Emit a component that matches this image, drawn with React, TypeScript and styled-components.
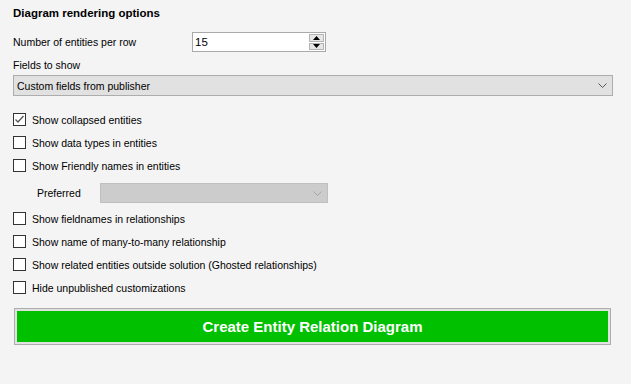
import React from "react"
import styled, { createGlobalStyle } from "styled-components"

const GlobalStyle = createGlobalStyle`
	html, body {
		margin: 0;
		padding: 0;
		background: #f4f4f4;
	}
	body {
		font-family: "Liberation Sans", Arial, sans-serif;
		font-size: 10.5px;
		color: #000;
	}
`

const options = [
	{ label: "Show collapsed entities", checked: true },
	{ label: "Show data types in entities", checked: false },
	{ label: "Show Friendly names in entities", checked: false },
]

const moreOptions = [
	"Show fieldnames in relationships",
	"Show name of many-to-many relationship",
	"Show related entities outside solution (Ghosted relationships)",
	"Hide unpublished customizations",
]

function Chevron(props: { color: string }) {
	return (
		<svg width="9" height="5" viewBox="0 0 9 5">
			<path d="M0.5 0.5 L4.5 4.5 L8.5 0.5" fill="none" stroke={props.color} strokeWidth="1" />
		</svg>
	)
}

function CheckOption(props: { label: string; checked?: boolean }) {
	return (
		<OptionRow>
			<Box>
				{props.checked && (
					<svg width="11" height="11" viewBox="0 0 11 11">
						<path d="M1.5 5.5 L4 8 L9.5 2" fill="none" stroke="#555" strokeWidth="1.3" />
					</svg>
				)}
			</Box>
			<span>{props.label}</span>
		</OptionRow>
	)
}

export default function App() {
	return (
		<>
			<GlobalStyle />
			<Root>
				<Title>Diagram rendering options</Title>

				<FieldRow>
					<FieldLabel>Number of entities per row</FieldLabel>
					<Spin>
						<SpinValue>15</SpinValue>
						<SpinButtons>
							<SpinButton>
								<svg width="7" height="4" viewBox="0 0 7 4">
									<path d="M0 4 L3.5 0 L7 4 Z" fill="#000" />
								</svg>
							</SpinButton>
							<SpinButton>
								<svg width="7" height="4" viewBox="0 0 7 4">
									<path d="M0 0 L3.5 4 L7 0 Z" fill="#000" />
								</svg>
							</SpinButton>
						</SpinButtons>
					</Spin>
				</FieldRow>

				<SubLabel>Fields to show</SubLabel>
				<Combo>
					<span>Custom fields from publisher</span>
					<Chevron color="#555" />
				</Combo>

				<Options>
					{options.map(o => (
						<CheckOption key={o.label} label={o.label} checked={o.checked} />
					))}
				</Options>

				<PreferredRow>
					<PreferredLabel>Preferred</PreferredLabel>
					<Combo disabled>
						<span />
						<Chevron color="#a6a6a6" />
					</Combo>
				</PreferredRow>

				<Options $tight>
					{moreOptions.map(o => (
						<CheckOption key={o} label={o} />
					))}
				</Options>

				<CreateButton>Create Entity Relation Diagram</CreateButton>
			</Root>
		</>
	)
}

const Root = styled.div`
	width: 631px;
	height: 384px;
	box-sizing: border-box;
	padding: 6px 0 0 13px;
	display: flex;
	flex-direction: column;
	background: #f4f4f4;
`

const Title = styled.div`
	font-weight: bold;
	font-size: 11.5px;
	line-height: 15px;
	height: 15px;
`

const FieldRow = styled.div`
	display: flex;
	align-items: center;
	margin-top: 11px;
	height: 20px;
`

const FieldLabel = styled.div`
	width: 179px;
`

const Spin = styled.div`
	width: 134px;
	height: 20px;
	box-sizing: border-box;
	border: 1px solid #a9a9a9;
	background: #fff;
	display: flex;
	align-items: stretch;
`

const SpinValue = styled.div`
	flex: 1;
	padding-left: 2px;
	display: flex;
	align-items: center;
	font-size: 11.5px;
`

const SpinButtons = styled.div`
	width: 15px;
	display: flex;
	flex-direction: column;
	gap: 1px;
	padding: 1px 1px 1px 0;
`

const SpinButton = styled.div`
	flex: 1;
	background: #e6e6e6;
	border: 1px solid #b4b4b4;
	display: flex;
	align-items: center;
	justify-content: center;
`

const SubLabel = styled.div`
	margin-top: 6px;
	line-height: 15px;
	height: 15px;
`

const Combo = styled.div<{ disabled?: boolean }>`
	margin-top: ${p => (p.disabled ? "0" : "2px")};
	width: ${p => (p.disabled ? "228px" : "600px")};
	height: ${p => (p.disabled ? "20px" : "21px")};
	box-sizing: border-box;
	border: 1px solid ${p => (p.disabled ? "#bfbfbf" : "#adadad")};
	background: ${p => (p.disabled ? "#cccccc" : "#e1e1e1")};
	display: flex;
	align-items: center;
	justify-content: space-between;
	padding: 0 5px 0 3px;
`

const Options = styled.div<{ $tight?: boolean }>`
	display: flex;
	flex-direction: column;
	margin-top: ${p => (p.$tight ? "4px" : "12px")};
`

const OptionRow = styled.div`
	height: 23px;
	display: flex;
	align-items: center;
	gap: 6px;
`

const Box = styled.div`
	width: 13px;
	height: 13px;
	box-sizing: border-box;
	border: 1px solid #333;
	background: #fff;
	display: flex;
	align-items: center;
	justify-content: center;
`

const PreferredRow = styled.div`
	display: flex;
	align-items: center;
	margin-top: 6px;
	height: 20px;
	padding-left: 24px;
`

const PreferredLabel = styled.div`
	width: 63px;
`

const CreateButton = styled.button`
	margin: 9px 0 0 1px;
	width: 597px;
	height: 37px;
	box-sizing: border-box;
	border: 1px solid #adadad;
	padding: 0;
	background: #00c000;
	box-shadow: inset 0 0 0 2px #e1e1e1;
	color: #fff;
	font-family: "Liberation Sans", Arial, sans-serif;
	font-weight: bold;
	font-size: 15px;
	cursor: pointer;
`
